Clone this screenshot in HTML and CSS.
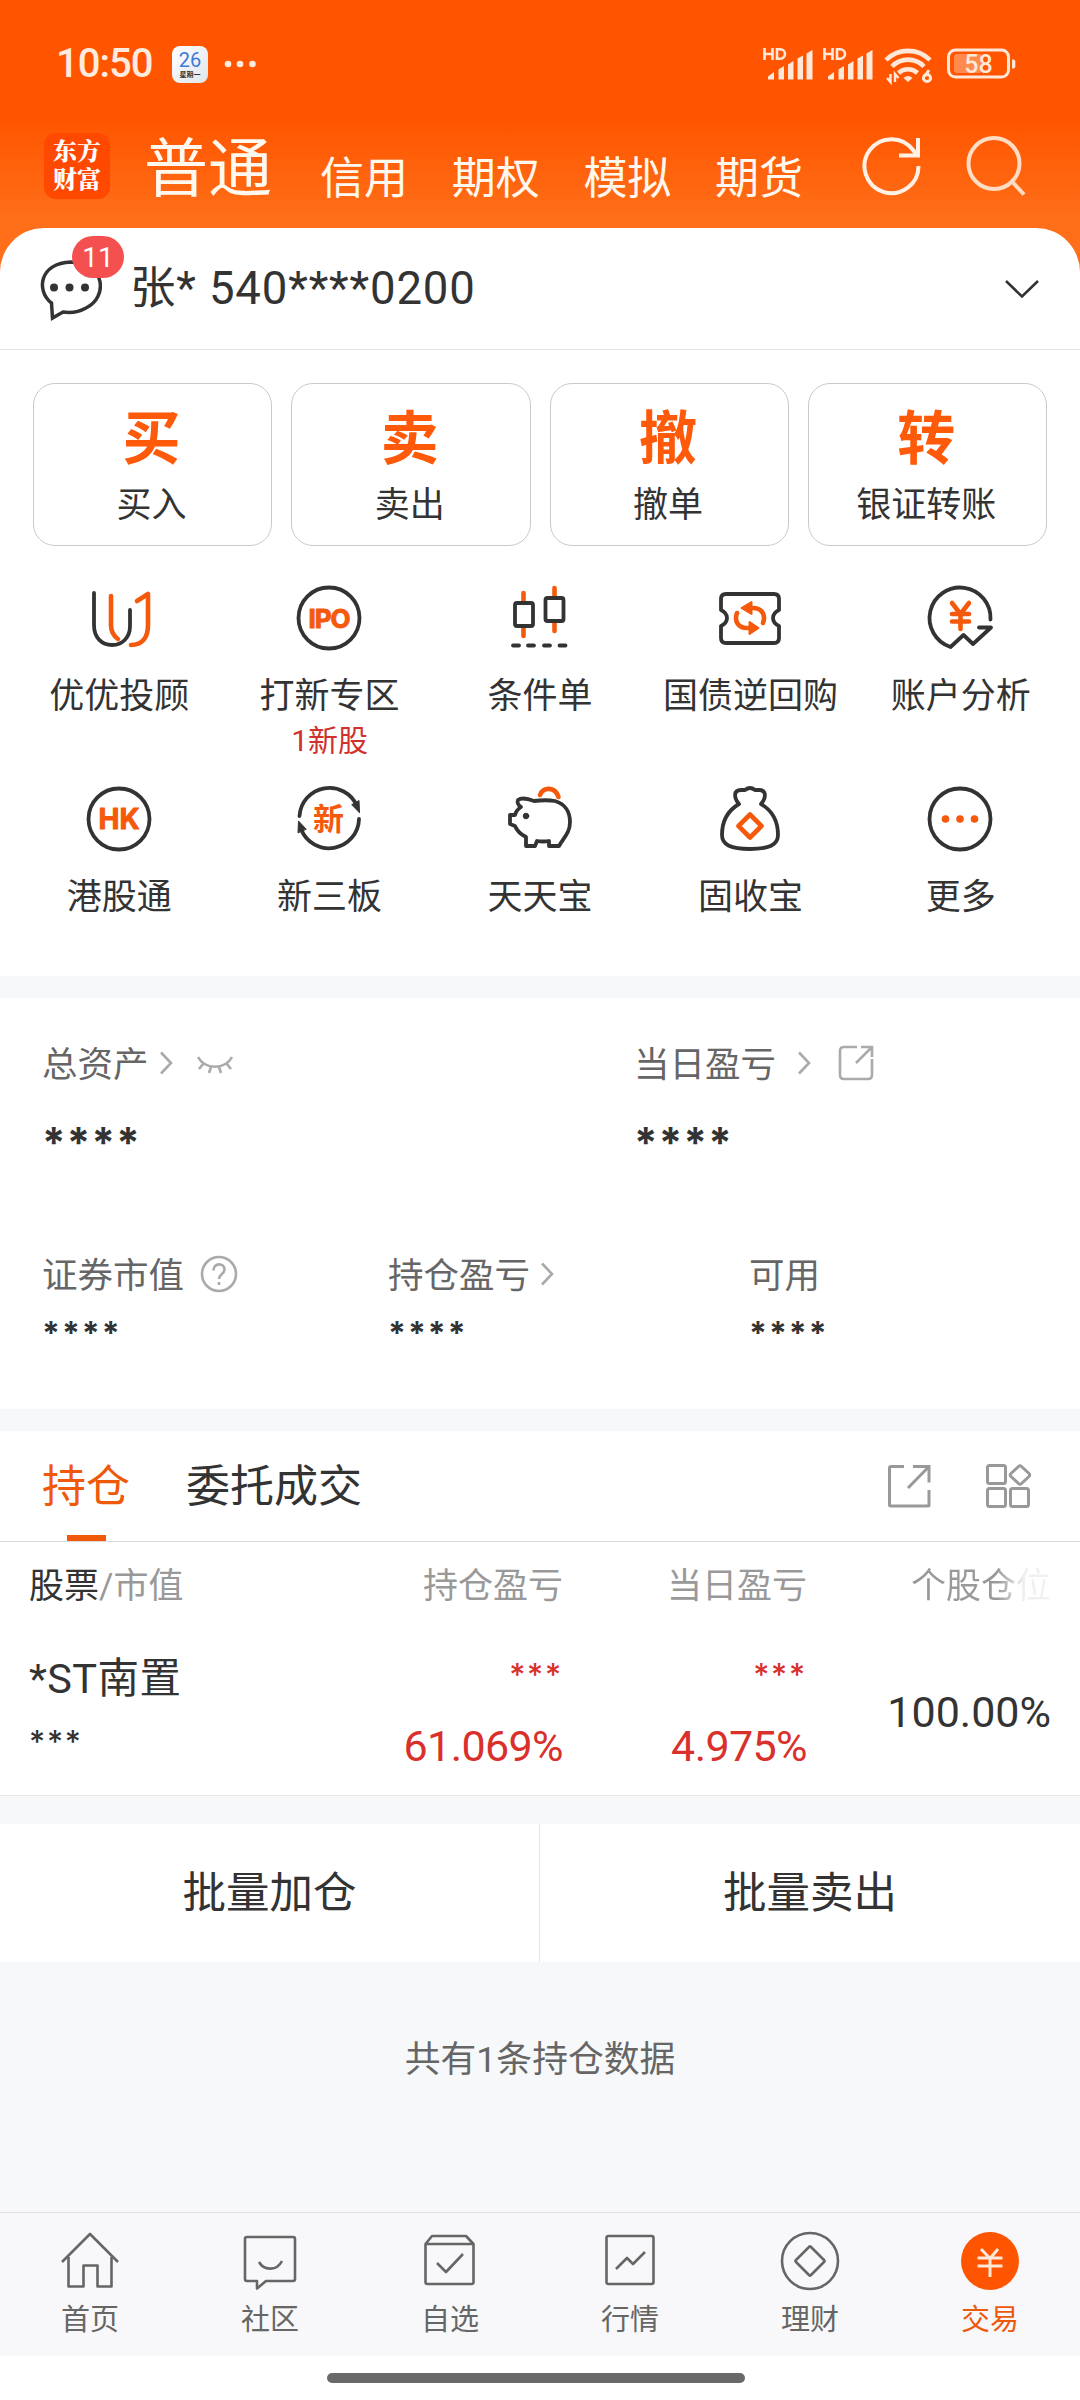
FILE: index.html
```html
<!DOCTYPE html>
<html lang="zh-CN">
<head>
<meta charset="utf-8">
<title>交易</title>
<link rel="stylesheet" href="styles.css">
</head>
<body>
<div class="app">
  <header class="header">
    <div class="status">
      <span class="time">10:50</span>
      <span class="cal"><b>26</b><i>星期一</i></span>
      <svg class="dots" width="32" height="8" viewBox="0 0 32 8" fill="#ffeadd"><circle cx="4" cy="4" r="3.3"/><circle cx="16" cy="4" r="3.3"/><circle cx="28.500" cy="4" r="3.3"/></svg>
      <svg class="signals" width="256" height="40" viewBox="0 0 256 40" fill="#ffe8d8">
        <g id="sig">
          <g fill="none" stroke="#ffe8d8" stroke-width="2.600"><path d="M2.500 2v12M10.500 2v12M2.500 8h8M15 3.200v9.600h3.200a4.800 4.800 0 0 0 0-9.600z"/></g>
          <path d="M6 33.500v-3l6-4.500v7.500zM16.500 33.500v-10l5.500-3.500v13.500zM26 33.500v-15l5.500-3.500v18.500zM35.500 33.500v-21l5.500-3v24zM44.500 33.500v-26l6-3.500v29.500z"/>
        </g>
        <use href="#sig" x="60"/>
        <g fill="none" stroke="#ffe8d8" stroke-width="4.600"><path d="M124 14a31 31 0 0 1 44 0"/><path d="M130 20.500a22 22 0 0 1 32 0"/><path d="M136.500 27a14 14 0 0 1 19 0"/></g>
        <path d="M141.500 32q4.500-4 9 0l-4.500 4z"/>
        <path d="M128.500 28v8l-3.500-4M133 36v-8l3.500 4" fill="none" stroke="#ffe8d8" stroke-width="2.400"/>
        <path d="M167 24l-4 6" fill="none" stroke="#ffe8d8" stroke-width="3"/><circle cx="165" cy="32" r="3.600" fill="none" stroke="#ffe8d8" stroke-width="3"/>
        <rect x="186.500" y="4" width="60" height="27" rx="7" fill="none" stroke="#ffe8d8" stroke-width="3"/>
        <rect x="192" y="8" width="28" height="19" rx="3" fill="#ff8a4d"/>
        <path d="M250 13.500h1.500q1.800 0 1.800 2v5q0 2-1.800 2H250z"/>
        <text x="216.500" y="27" text-anchor="middle" class="bat">58</text>
      </svg>
    </div>
    <nav class="modes">
      <span class="logo">东方<br>财富</span>
      <span class="mode on">普通</span>
      <span class="mode">信用</span><span class="mode">期权</span><span class="mode">模拟</span><span class="mode">期货</span>
      <svg class="hicon refresh" width="60" height="62" viewBox="0 0 60 62" fill="none" stroke="#fff1e6" stroke-width="4"><path d="M56.500 31a27 27 0 1 1-5-15.500L54 19"/><path d="M56 3v17.500H37"/></svg>
      <svg class="hicon" width="60" height="62" viewBox="0 0 60 62" fill="none" stroke="#ffdcc4" stroke-width="4"><circle cx="28" cy="28.500" r="25.500"/><path d="M46 46.500l12 13"/></svg>
    </nav>
  </header>

  <main class="sheet">
    <div class="account">
      <span class="msg">
        <svg width="64" height="66" viewBox="0 0 64 66"><path d="M13.500 47C-2 35 1 7 33 6c35 0 37 36 15 46-7 4-16 5-23 4L14.500 62z" fill="none" stroke="#333" stroke-width="3.500"/><g fill="#333"><circle cx="16" cy="31.500" r="4"/><circle cx="31.500" cy="31.500" r="4"/><circle cx="47" cy="31.500" r="4"/></g></svg>
        <em class="badge">11</em>
      </span>
      <span class="acct">张* 540****0200</span>
      <svg class="down" width="36" height="20" viewBox="0 0 36 20" fill="none" stroke="#333" stroke-width="2.600"><path d="M2 2l16 15.500L34 2"/></svg>
    </div>

    <div class="cards">
      <div class="card"><b>买</b><span>买入</span></div>
      <div class="card"><b>卖</b><span>卖出</span></div>
      <div class="card"><b>撤</b><span>撤单</span></div>
      <div class="card"><b>转</b><span>银证转账</span></div>
    </div>

    <div class="tools">
      <div class="tool"><svg class="ic" viewBox="0 0 72 72"><path d="M11 11v32c0 13 8 20 18 20s18-7 18-19V28"/><path class="o" d="M28 14v29q0 9 7 14M54 19l11-7v31c0 13-6 20-17 20"/></svg><span>优优投顾</span></div>
      <div class="tool"><svg class="ic" viewBox="0 0 72 72"><circle cx="36" cy="36" r="30.500"/><text x="36" y="46" text-anchor="middle" class="ict ipo">IPO</text></svg><span>打新专区</span><small>1新股</small></div>
      <div class="tool"><svg class="ic" viewBox="0 0 72 72"><path class="o" d="M20.500 11v9M20.500 46v8M51.500 6v9M51.500 41v8"/><rect x="12" y="21" width="18" height="23" rx="2"/><rect x="42.500" y="16" width="18" height="23" rx="2"/><path d="M10 63.500h6M25 63.500h6M41 63.500h6M56.500 63.500h6"/></svg><span>条件单</span></div>
      <div class="tool"><svg class="ic" viewBox="0 0 72 72"><path d="M12 12h48q5 0 5 5v11q-6 3-6 8t6 8v12q0 5-5 5H12q-5 0-5-5V44q6-3 6-8t-6-8V17q0-5 5-5z"/><path class="o" d="M23 31c-3 8 1 15 10 15h4M49 41c3-8-1-15-10-15h-4"/><path class="of" d="M27.500 26l10-6v12zM44.500 46l-9-6v12z"/></svg><span>国债逆回购</span></div>
      <div class="tool"><svg class="ic" viewBox="0 0 72 72"><path d="M66.500 37.500A30.500 30.500 0 1 0 26.500 65L39.500 53l9.500 9 18-16.500H55"/><path class="o" d="M28 21l8.500 11L45 21M36.500 32v15M28 32h17M28 39.500h17"/></svg><span>账户分析</span></div>
      <div class="tool"><svg class="ic" viewBox="0 0 72 72"><circle cx="36" cy="36" r="30.500"/><text x="36" y="46" text-anchor="middle" class="ict hk">HK</text></svg><span>港股通</span></div>
      <div class="tool"><svg class="ic" viewBox="0 0 72 72"><path d="M6.500 33A30 30 0 0 1 64 23M66 36A30 30 0 0 1 8 46"/><path class="df" d="M59 21.500l7-4 .500 12zM5 49.500l.500-11.500L13 46z"/><text x="35.500" y="46.500" text-anchor="middle" class="ict xin">新</text></svg><span>新三板</span></div>
      <div class="tool"><svg class="ic" viewBox="0 0 72 72"><path d="M15 17c4-3 10-1 16 1 8-1 15-1 21 0 10 3 15 11 15 21 0 11-6 15-11 24H46v-5q-6 1-12 0l-2 5H23v-9c-6-3-9-6-11-11l-5-2v-9h5c1-4 3-6 6-8-3-2-4-5-3-7z"/><path class="o" d="M37 12c3-8 15-9 18.500 2"/><circle class="df" cx="23" cy="33" r="2.800"/></svg><span>天天宝</span></div>
      <div class="tool"><svg class="ic" viewBox="0 0 72 72"><path d="M25 21c-5-6-6-14 2-14h4q5-4 10 0h4c8 0 7 8 2 14 12 7 17 17 17 31 0 10-9 14-28 14S8 62 8 52c0-14 5-24 17-31z"/><path class="o" d="M36 31.500L47.500 43 36 54.500 24.500 43z"/></svg><span>固收宝</span></div>
      <div class="tool"><svg class="ic" viewBox="0 0 72 72"><circle cx="36" cy="36" r="30.500"/><g class="of"><circle cx="21.500" cy="36" r="2.800"/><circle cx="36" cy="36" r="2.800"/><circle cx="50.500" cy="36" r="2.800"/></g></svg><span>更多</span></div>
    </div>
  </main>

  <section class="assets">
    <div class="row top">
      <div class="asset">
        <div class="lab">总资产<svg class="chev" viewBox="0 0 14 24"><path d="M2 1.500L12 12 2 22.500"/></svg><svg class="eye" width="38" height="20" viewBox="0 0 38 20"><path d="M2 2c7 13 27 13 34 0M7 9l-4 5M31 9l4 5M15 12l-2 6M23 12l2 6"/></svg></div>
        <div class="stars big">****</div>
      </div>
      <div class="asset">
        <div class="lab">当日盈亏<svg class="chev wide" viewBox="0 0 14 24"><path d="M2 1.500L12 12 2 22.500"/></svg><svg class="share" viewBox="0 0 36 36"><path d="M19 2H6Q2 2 2 6v24q0 4 4 4h24q4 0 4-4V14M23 2h11v10M33 3L18 18"/></svg></div>
        <div class="stars big">****</div>
      </div>
    </div>
    <div class="row sub">
      <div class="asset">
        <div class="lab">证券市值<svg class="help" viewBox="0 0 38 38"><circle cx="19" cy="19" r="17"/><path d="M13.500 15.500c0-8 11-8 11-1 0 4.500-5.500 4.500-5.500 9.500"/><path d="M19 27v3"/></svg></div>
        <div class="stars">****</div>
      </div>
      <div class="asset">
        <div class="lab">持仓盈亏<svg class="chev" viewBox="0 0 14 24"><path d="M2 1.500L12 12 2 22.500"/></svg></div>
        <div class="stars">****</div>
      </div>
      <div class="asset">
        <div class="lab">可用</div>
        <div class="stars">****</div>
      </div>
    </div>
  </section>

  <section class="holdings">
    <div class="tabs">
      <span class="tab on">持仓</span><span class="tab">委托成交</span>
      <svg class="tshare" width="44" height="44" viewBox="0 0 44 44"><path d="M17 2.500H4Q2.500 2.500 2.500 4v37q0 1 1.500 1h37q1 0 1-1V26M26 2.500h16v16M42 2.500L21 24"/></svg>
      <svg width="48" height="46" viewBox="0 0 48 46"><rect x="2.500" y="2.500" width="18" height="18" rx="2"/><rect x="2.500" y="25.500" width="18" height="18" rx="2"/><rect x="25.500" y="25.500" width="18" height="18" rx="2"/><path d="M33.500 3.500q1.500-1.500 3 0l7.500 7q1.500 1.500 0 3l-7.500 7q-1.500 1.500-3 0l-7.500-7q-1.500-1.500 0-3z"/></svg>
    </div>
    <div class="grid head"><span><b>股票</b>/市值</span><span>持仓盈亏</span><span>当日盈亏</span><span class="fade">个股仓位</span></div>
    <div class="grid stock">
      <div class="cell"><span class="name">*ST南置</span><span class="mask">***</span></div>
      <div class="cell red"><span class="mask">***</span><span class="num">61.069%</span></div>
      <div class="cell red"><span class="mask">***</span><span class="num">4.975%</span></div>
      <div class="cell"><span class="num">100.00%</span></div>
    </div>
  </section>

  <div class="batch"><span>批量加仓</span><span>批量卖出</span></div>
  <p class="total">共有1条持仓数据</p>

  <nav class="tabbar">
    <div><svg viewBox="0 0 60 64"><path d="M2 33L30 5l28 28M8.500 28v29.500h15V36.500h14v21h14V28"/></svg><span>首页</span></div>
    <div><svg viewBox="0 0 60 64"><path d="M7 8h46q2 0 2 2v40q0 2-2 2H26l-9 7.500V52H7q-2 0-2-2V10q0-2 2-2zM19 33c5 9 18 9 23-1"/></svg><span>社区</span></div>
    <div><svg viewBox="0 0 60 64"><path d="M5.500 15L12 7h34l7.500 8v38q0 2-2 2h-44q-2 0-2-2zM5.500 15h48M17 34l9 9 17-18"/></svg><span>自选</span></div>
    <div><svg viewBox="0 0 60 64"><rect x="6.500" y="7" width="47" height="48" rx="2"/><path d="M16 40l11-11 6 6 12-12"/></svg><span>行情</span></div>
    <div><svg viewBox="0 0 60 64"><circle cx="30" cy="32" r="28"/><path d="M29 18q1-1 2 0l13 13q1 1 0 2L31 46q-1 1-2 0L16 33q-1-1 0-2z"/></svg><span>理财</span></div>
    <div class="on"><svg viewBox="0 0 60 64"><circle class="disc" cx="30" cy="32" r="29"/><path class="yen" d="M21 20l9 9.500L38 20M30 29v19M17.500 29h25M17.500 37h25"/></svg><span>交易</span></div>
  </nav>
  <div class="home"><i></i></div>
</div>
</body>
</html>
```
FILE: styles.css
```css
* { box-sizing: border-box; }
body { margin: 0; background: #f7f8fa; font-family: Roboto, "Noto Sans CJK SC", sans-serif; color: #333; }
i, em { font-style: normal; }
svg { display: block; flex: none; }
.app { width: 1080px; height: 2400px; display: flex; flex-direction: column; overflow: hidden; background: #f7f8fa; }
.app > * { flex: none; }

.header { height: 272px; margin-bottom: -44px; background: linear-gradient(#ff5500 0, #ff5500 118px, #ff6e18 218px, #ff6e18); }
.status { height: 128px; padding: 0 0 0 56px; display: flex; align-items: center; }
.time { font-size: 40px; font-weight: 500; letter-spacing: -1px; color: #ffeadd; width: 98px; line-height: 48px; }
.cal { margin-left: 18px; width: 36px; height: 37px; border-radius: 8px; background: linear-gradient(135deg, #fff, #dfe6ec); display: flex; flex-direction: column; align-items: center; padding-top: 4px; }
.cal b { font: 400 20px/20px Roboto, sans-serif; color: #3e7bd6; }
.cal i { font: 700 7px/8px "Noto Sans CJK SC", sans-serif; color: #333; }
.dots { margin-left: 16px; }
.signals { margin-left: 506px; margin-top: 3px; }
.bat { font: 500 25px Roboto, sans-serif; }
.modes { height: 100px; padding-left: 44px; display: flex; align-items: flex-start; color: #fff8ee; }
.logo { width: 66px; height: 66px; margin: 5px 35px 0 0; border-radius: 12px; background: #ff4800; padding-top: 5px; text-align: center; color: #fff; font: 900 24px/28px "Liberation Serif", "Noto Serif CJK SC", "Noto Sans CJK SC", serif; }
.mode { font: 400 44px/60px "Noto Sans CJK SC", sans-serif; margin: 17px 0 0 43.700px; }
.mode.on { font-size: 64px; line-height: 80px; margin: -5px 0 0 -1px; }
.mode.on + .mode { margin-left: 48px; }
.hicon { margin: 7px 0 0 44px; }
.refresh { margin-left: 59px; }

.sheet { height: 748px; background: #fff; border-radius: 44px 44px 0 0; }
.account { height: 122px; border-bottom: 1px solid #e2e2e2; padding: 0 40px 0 38px; display: flex; align-items: center; }
.msg { position: relative; width: 64px; height: 66px; }
.badge { position: absolute; left: 34px; top: -20px; width: 52px; height: 42px; border-radius: 21px; background: #f55050; color: #fff; font-size: 28px; line-height: 43px; text-align: center; }
.acct { margin: 1px 0 0 28px; font-size: 45.500px; letter-spacing: .850px; line-height: 60px; white-space: nowrap; }
.down { margin: 0 0 0 auto; }
.cards { display: grid; grid-template-columns: repeat(4, 1fr); gap: 19px; padding: 33px 33px 0 33px; }
.card { height: 163px; border: 1px solid #cacaca; border-radius: 22px; display: flex; flex-direction: column; align-items: center; padding-right: 2px; font-family: "Noto Sans CJK SC", sans-serif; }
.card b { font-size: 58px; line-height: 64px; margin-top: 18px; color: #ff5a0a; font-weight: 700; }
.card span { font-size: 35px; line-height: 44px; margin-top: 14px; }
.tools { display: grid; grid-template-columns: repeat(5, 1fr); grid-auto-rows: 201px; padding: 36px 14px 0; }
.tool { display: flex; flex-direction: column; align-items: center; font: 35px/44px "Noto Sans CJK SC", sans-serif; }
.tool > span { margin-top: 17px; white-space: nowrap; }
.tool small { font: 30px/36px Roboto, "Noto Sans CJK SC", sans-serif; margin-top: 8px; color: #d0312d; }
.ic { width: 72px; height: 72px; margin-left: -1px; fill: none; stroke: #333; stroke-width: 3.800; stroke-linecap: round; stroke-linejoin: round; }
.o { stroke: #f55a0c; stroke-width: 4.600; }
.of { fill: #f55a0c; stroke: #f55a0c; stroke-width: 2; }
.df { fill: #333; stroke-width: 1; }
.ict { fill: #f55a0c; stroke: #f55a0c; stroke-width: 1; font: 700 28px Inter, sans-serif; }
.ipo { font-size: 26px; letter-spacing: -1px; }
.xin { font: 700 31px "Noto Sans CJK SC", sans-serif; stroke: none; }

.assets { height: 411px; margin-top: 22px; background: #fff; padding-top: 40px; }
.row { display: grid; padding-left: 42px; height: 211px; }
.top { grid-template-columns: 592px 1fr; }
.sub { grid-template-columns: 346px 361px 1fr; }
.lab { display: flex; align-items: center; height: 48px; font: 35.500px/48px "Noto Sans CJK SC", sans-serif; color: #666; }
.lab svg { fill: none; stroke: #aaa; stroke-width: 2.600; }
.lab .chev { width: 14px; height: 24px; margin: 2px 0 0 10px; }
.lab .wide { margin-left: 21px; }
.eye { margin: 6px 0 0 23px; }
.share { width: 36px; height: 36px; margin: 2px 0 0 27px; }
.help { width: 38px; height: 38px; margin: 2px 0 0 16px; }
.stars { font: 700 32px/40px Inter, sans-serif; letter-spacing: 2px; padding: 17px 0 0 0; }
.big { font-size: 42px; line-height: 50px; letter-spacing: 1.300px; padding-top: 32px; }

.holdings { height: 365px; margin-top: 22px; background: #fff; border-bottom: 1px solid #e8e8e8; }
.tabs { height: 111px; border-bottom: 1px solid #dadada; padding: 0 47px 0 42px; display: flex; align-items: center; }
.tabs svg { fill: none; stroke: #999; stroke-width: 3; margin-left: 54px; }
.tabs .tshare { margin-left: auto; }
.tab { font: 44px/105px "Noto Sans CJK SC", sans-serif; margin-right: 56px; height: 110px; }
.tab.on { color: #f0590a; background: linear-gradient(#f0590a, #f0590a) center bottom / 39px 6px no-repeat; }
.grid { display: grid; grid-template-columns: 290px 244px 244px 244px; padding-left: 29px; }
.grid > * { text-align: right; white-space: nowrap; }
.grid > :first-child { text-align: left; }
.head { height: 84px; font: 35px/90px Roboto, "Noto Sans CJK SC", sans-serif; color: #999; }
.head b { font-weight: 400; color: #333; }
.fade { background: linear-gradient(90deg, #999 0, #999 190px, #eee 216px, #f2f2f2); -webkit-background-clip: text; background-clip: text; color: transparent; }
.cell { display: flex; flex-direction: column; }
.name { font-size: 41.500px; line-height: 60px; margin-top: 23px; letter-spacing: .4px; }
.num { font-size: 43px; line-height: 56px; letter-spacing: -.6px; }
.mask { font: 500 31px/40px Inter, sans-serif; letter-spacing: 1.800px; }
.cell:first-child .mask { margin-top: 13px; }
.red { color: #d9302c; }
.red .mask { margin-top: 29px; }
.red .num { margin-top: 23px; }
.cell:last-child .num { margin-top: 58px; letter-spacing: 0; }

.batch { height: 138px; margin-top: 28px; background: #fff; display: grid; grid-template-columns: 539px 1fr; }
.batch span { text-align: center; font: 43.500px/132px "Noto Sans CJK SC", sans-serif; }
.batch span + span { border-left: 1px solid #e4e4e4; }
.total { margin: 72px 0 0; height: 52px; text-align: center; font: 35.800px/52px Roboto, "Noto Sans CJK SC", sans-serif; color: #666; }

.tabbar { margin-top: auto; height: 144px; border-top: 1px solid #e2e2e2; display: grid; grid-template-columns: repeat(6, 1fr); padding-top: 16px; background: #f8f8fa; }
.tabbar div { display: flex; flex-direction: column; align-items: center; font: 29px/36px "Noto Sans CJK SC", sans-serif; color: #666; }
.tabbar svg { width: 60px; height: 64px; fill: none; stroke: #666; stroke-width: 2.600; stroke-linejoin: round; }
.tabbar span { margin-top: 6px; }
.tabbar .on { color: #ec5a0f; }
.tabbar .disc { fill: #ff5500; stroke: none; }
.tabbar .yen { stroke: #ffe8d8; stroke-width: 3; }
.home { height: 44px; background: #fff; padding: 17px 0 0 327px; }
.home i { display: block; width: 418px; height: 10px; border-radius: 5px; background: #696969; }
```
